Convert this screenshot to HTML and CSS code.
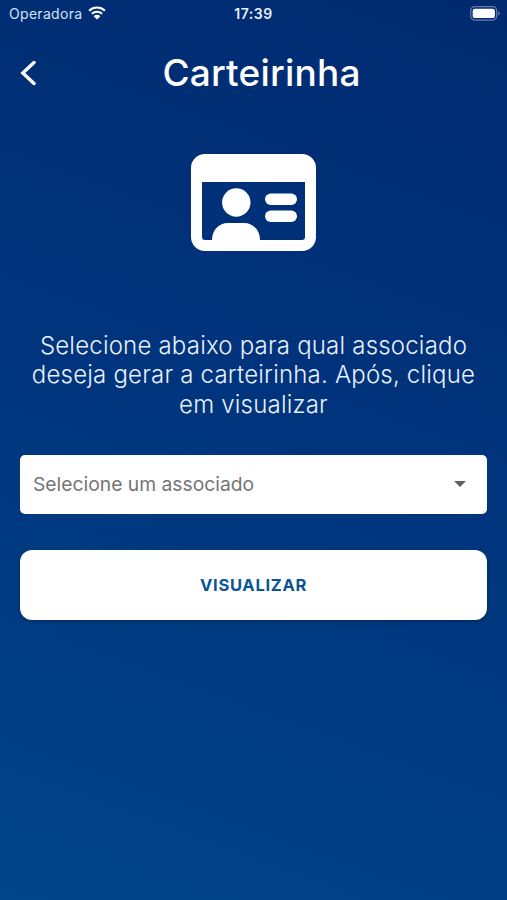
FILE: index.html
```html
<!DOCTYPE html>
<html lang="pt-BR">
<head>
    <meta charset="UTF-8">
    <meta name="viewport" content="width=device-width, initial-scale=1.0">
    <title>Carteirinha</title>
    <link rel="stylesheet" href="styles.css">
</head>
<body>
    <div class="status-bar">
        <div class="carrier">
            <span class="carrier-name">Operadora</span>
            <svg class="wifi" viewBox="0 0 18 14" width="18" height="14">
                <path d="M1.1 4.7a11.4 11.4 0 0 1 15.8 0M3.9 7.8a7.4 7.4 0 0 1 10.2 0" fill="none" stroke="#fff" stroke-width="2.2"/>
                <path d="M9 13.6 5.6 10.2a4.9 4.9 0 0 1 6.8 0z" fill="#fff"/>
            </svg>
        </div>
        <span class="time">17:39</span>
        <div class="battery">
            <svg viewBox="0 0 30 15" width="30" height="15">
                <rect x=".7" y=".7" width="26" height="13.4" rx="4" fill="none" stroke="#fff" stroke-opacity=".4" stroke-width="1.2"/>
                <rect x="2.7" y="2.7" width="22.2" height="9.4" rx="2.2" fill="#fff"/>
                <path d="M28.2 5.2c2 .7 2 3.7 0 4.4z" fill="#fff" fill-opacity=".4"/>
            </svg>
        </div>
    </div>

    <header class="header">
        <a href="#" class="back" aria-label="Voltar">
            <svg viewBox="0 0 16 26" width="16" height="26">
                <path d="M14 2.5 2.8 13 14 23.5" fill="none" stroke="#fff" stroke-width="3.4" stroke-linecap="round"/>
            </svg>
        </a>
        <h1>Carteirinha</h1>
    </header>

    <main class="container">
        <svg class="card-icon" viewBox="0 0 125 98" width="125" height="98">
            <path fill="#fff" fill-rule="evenodd" d="M14 0h97a14 14 0 0 1 14 14v69a14 14 0 0 1-14 14H14A14 14 0 0 1 0 83V14A14 14 0 0 1 14 0zM11 28v55q0 3 3 3h7c0-10 7-17 16-17h16c9 0 16 7 16 17h42q3 0 3-3V28z"/>
            <circle cx="45.3" cy="48.5" r="14.2" fill="#fff"/>
            <rect x="74" y="39.5" width="32" height="11.4" rx="5.7" fill="#fff"/>
            <rect x="74" y="56.5" width="32" height="11.4" rx="5.7" fill="#fff"/>
        </svg>

        <p class="message">Selecione abaixo para qual associado<br>deseja gerar a carteirinha. Após, clique<br>em visualizar</p>

        <div class="select">
            <span>Selecione um associado</span>
            <svg viewBox="0 0 12 6" width="12" height="6">
                <path d="M0 0h12L6 6z" fill="#616161"/>
            </svg>
        </div>

        <button class="btn">VISUALIZAR</button>
    </main>
</body>
</html>
```
FILE: styles.css
```css
body {
    font-family: Inter, "Liberation Sans", sans-serif;
    margin: 0;
    min-height: 900px;
    color: #fff;
    background: linear-gradient(200deg, #002a70 0%, #00347c 45%, #00448a 100%);
}

.status-bar {
    display: grid;
    grid-template-columns: 1fr auto 1fr;
    align-items: center;
    height: 28px;
    padding: 0 7px 0 9px;
}

.carrier {
    display: flex;
    align-items: center;
    gap: 6px;
}

.carrier-name {
    margin-top: -2px;
    font-size: 14px;
    letter-spacing: 0.3px;
    color: #d5e2f5;
}

.wifi {
    margin-top: -3px;
}

.time {
    margin: -2px 2px 0 0;
    font-size: 14px;
    font-weight: 600;
    letter-spacing: 0.5px;
    color: #e6eefa;
}

.battery {
    display: flex;
    justify-content: flex-end;
    margin-top: -1px;
}

.header {
    display: grid;
    grid-template-columns: 36px 1fr 20px;
    align-items: center;
    height: 90px;
    padding: 0 20px;
}

.back {
    display: flex;
}

h1 {
    margin: -1px 0 0;
    font-size: 37px;
    font-weight: 500;
    letter-spacing: 0.2px;
    text-align: center;
}

.container {
    display: flex;
    flex-direction: column;
    align-items: center;
    padding: 36px 20px 0;
}

.message {
    margin: 79px 0 36px;
    font-size: 24px;
    font-weight: 300;
    line-height: 29.3px;
    letter-spacing: 0.2px;
    text-align: center;
    white-space: nowrap;
    color: #e8f0fc;
}

.select {
    display: flex;
    align-items: center;
    justify-content: space-between;
    box-sizing: border-box;
    width: 467px;
    height: 59px;
    padding: 0 21px 0 13px;
    border-radius: 5px;
    background: #fff;
    color: #757575;
    font-size: 19.3px;
}

.btn {
    width: 467px;
    height: 70px;
    margin-top: 36px;
    border: none;
    border-radius: 12px;
    background: #fff;
    color: #0b5596;
    font-family: inherit;
    font-size: 16.5px;
    font-weight: 700;
    letter-spacing: 0.7px;
    box-shadow: 0 2px 4px rgba(0, 0, 0, 0.25);
}
```
